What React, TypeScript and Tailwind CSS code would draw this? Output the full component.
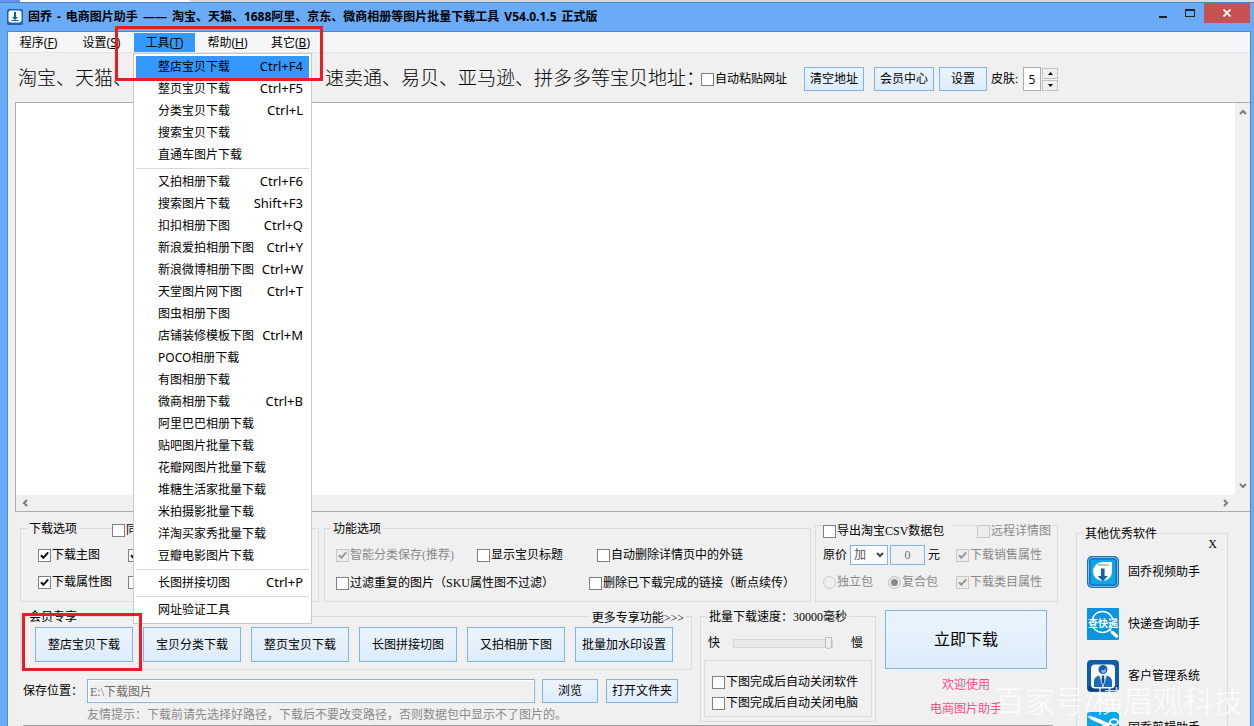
import type { ReactNode } from "react";
import clsx from "clsx";

type MenuEntry = { name: string; keys?: string } | "separator";

const titleParts = ["固乔", "-", "电商图片助手", "——", "淘宝、天猫、1688阿里、京东、微商相册等图片批量下载工具", "V54.0.1.5", "正式版"];

const menus = [
    { name: "程序", key: "F" },
    { name: "设置", key: "S" },
    { name: "工具", key: "T" },
    { name: "帮助", key: "H" },
    { name: "其它", key: "B" },
];

const toolEntries: MenuEntry[] = [
    { name: "整店宝贝下载", keys: "Ctrl+F4" },
    { name: "整页宝贝下载", keys: "Ctrl+F5" },
    { name: "分类宝贝下载", keys: "Ctrl+L" },
    { name: "搜索宝贝下载" },
    { name: "直通车图片下载" },
    "separator",
    { name: "又拍相册下载", keys: "Ctrl+F6" },
    { name: "搜索图片下载", keys: "Shift+F3" },
    { name: "扣扣相册下图", keys: "Ctrl+Q" },
    { name: "新浪爱拍相册下图", keys: "Ctrl+Y" },
    { name: "新浪微博相册下图", keys: "Ctrl+W" },
    { name: "天堂图片网下图", keys: "Ctrl+T" },
    { name: "图虫相册下图" },
    { name: "店铺装修模板下图", keys: "Ctrl+M" },
    { name: "POCO相册下载" },
    { name: "有图相册下载" },
    { name: "微商相册下载", keys: "Ctrl+B" },
    { name: "阿里巴巴相册下载" },
    { name: "贴吧图片批量下载" },
    { name: "花瓣网图片批量下载" },
    { name: "堆糖生活家批量下载" },
    { name: "米拍摄影批量下载" },
    { name: "洋淘买家秀批量下载" },
    { name: "豆瓣电影图片下载" },
    "separator",
    { name: "长图拼接切图", keys: "Ctrl+P" },
    "separator",
    { name: "网址验证工具" },
];

const memberActions = ["整店宝贝下载", "宝贝分类下载", "整页宝贝下载", "长图拼接切图", "又拍相册下图", "批量加水印设置"];

function Check({ label, checked, disabled, hideLabel }: { label: string; checked?: boolean; disabled?: boolean; hideLabel?: boolean }) {
    return (
        <label className={clsx("flex h-4 items-center gap-px whitespace-nowrap", disabled && "text-[#8a8a8a]")}>
            <span className="grid shrink-0">
                <input
                    type="checkbox"
                    defaultChecked={checked}
                    disabled={disabled}
                    aria-label={hideLabel ? label : undefined}
                    className="peer col-start-1 row-start-1 size-[13px] appearance-none border border-[#808080] bg-white disabled:border-[#c8c8c8] disabled:bg-[#ececec]"
                />
                <svg
                    viewBox="0 0 13 13"
                    className="pointer-events-none invisible col-start-1 row-start-1 size-[13px] peer-checked:visible"
                    fill="none"
                    stroke={disabled ? "#969696" : "#111"}
                    strokeWidth="2"
                >
                    <path d="M3 6.2 L5.4 8.8 L10.2 3.4" />
                </svg>
            </span>
            {!hideLabel && label}
        </label>
    );
}

function Radio({ label, checked }: { label: string; checked?: boolean }) {
    return (
        <label className="flex h-4 items-center gap-px whitespace-nowrap text-[#8a8a8a]">
            <input
                type="radio"
                name="package"
                defaultChecked={checked}
                disabled
                className="size-[13px] appearance-none rounded-full border border-[#cacaca] bg-[#efefef] checked:bg-[#8a8a8a] checked:shadow-[inset_0_0_0_2px_#efefef]"
            />
            {label}
        </label>
    );
}

function Group({ title, className, children }: { title?: ReactNode; className: string; children: ReactNode }) {
    return (
        <fieldset className={clsx("relative min-w-0 border border-[#dcdcdc]", className)}>
            {title && <legend className="absolute -top-2 left-[6px] bg-[#f0f0f0] px-[2px] leading-4">{title}</legend>}
            {children}
        </fieldset>
    );
}

function PushButton({ className, children }: { className: string; children: ReactNode }) {
    return (
        <button
            type="button"
            className={clsx(
                "shrink-0 whitespace-nowrap border border-[#7eb4ea] bg-linear-to-b from-[#ebf4fc] to-[#dcecfc] text-center",
                className
            )}
        >
            {children}
        </button>
    );
}

function ToolsMenu() {
    return (
        <ul className="absolute top-[21px] -left-px z-20 w-[179px] border border-[#c8c8c8] bg-white p-[2px]">
            {toolEntries.map((entry, i) =>
                entry === "separator" ? (
                    <li key={i} className="flex h-[5px] items-center">
                        <hr className="w-full border-[#d7d7d7]" />
                    </li>
                ) : (
                    <li key={entry.name}>
                        <button
                            type="button"
                            className={clsx(
                                "flex h-[22px] w-full items-center justify-between whitespace-nowrap pr-[6px] pl-[22px]",
                                i === 0 && "bg-[#3399ff]"
                            )}
                        >
                            <span>{entry.name}</span>
                            {entry.keys && <span className="text-[13px]">{entry.keys}</span>}
                        </button>
                    </li>
                )
            )}
        </ul>
    );
}

function AppIcon() {
    return (
        <svg viewBox="0 0 16 16" className="size-4">
            <rect width="16" height="16" rx="2" fill="#1566a8" />
            <rect x="1.5" y="1.5" width="13" height="12" rx="2" fill="#fff" />
            <path d="M7 3h2v5h2L8 11 5 8h2z" fill="#0f5c9e" />
            <path d="M4.5 11.5h7" stroke="#0f5c9e" />
        </svg>
    );
}

function VideoIcon() {
    return (
        <svg viewBox="0 0 32 32" className="size-8">
            <rect width="32" height="32" rx="5" fill="#1b6db8" />
            <rect x="1.5" y="1.5" width="29" height="29" rx="4" fill="none" stroke="#7cc4f2" />
            <rect x="3.5" y="3.5" width="25" height="25" rx="3" fill="#0aa5ea" />
            <path d="M25 6v10a9.5 9.5 0 1 1-9.5-10z" fill="#fff" />
            <path d="M11 9h11" stroke="#8b949c" strokeWidth="1.6" strokeDasharray="1.6 .5" />
            <path d="M14 12.5h3.6v7.500h3.200l-5 5.500-5-5.500H14z" fill="#1560ae" />
        </svg>
    );
}

function ExpressIcon() {
    return (
        <svg viewBox="0 0 32 32" className="size-8">
            <rect width="32" height="32" rx="1" fill="#0f93dd" />
            <circle cx="15.5" cy="14" r="10.5" fill="none" stroke="#fff" strokeWidth="1.4" />
            <path d="M22 21l2 2" stroke="#fff" strokeWidth="1.5" />
            <path d="M25.5 24.5l4 3.500" stroke="#fff" strokeWidth="3.5" strokeLinecap="round" />
            <rect x="1" y="11" width="30" height="8.5" fill="#0f93dd" />
            <text x="16" y="19" textAnchor="middle" fontSize="10" fontWeight="700" fill="#fff">
                查快递
            </text>
        </svg>
    );
}

function CustomerIcon() {
    return (
        <svg viewBox="0 0 32 32" className="size-8">
            <rect width="32" height="32" rx="4" fill="#0c5fae" />
            <path d="M1 26h30v2a3 3 0 0 1-3 3H4a3 3 0 0 1-3-3z" fill="#123f77" />
            <rect x="4" y="4.5" width="24" height="24" rx="4" fill="#fff" />
            <circle cx="16" cy="9.5" r="4.5" fill="#1361ae" />
            <path d="M14 10.500c2.500 0 4-1 5-2 .6 2.500-.5 4.500-3 4.500-1 0-2-1-2-2.500z" fill="#8bb6de" />
            <path d="M7 27v-5.500c0-4 3-5.500 6-6l3 7 3-7c3 .5 6 2 6 6V27z" fill="#1b6db8" />
            <path d="M14.500 15.500h3l-.7 2 1.200 7-2 2.500-2-2.500 1.200-7z" fill="#0e478a" />
            <path d="M12.500 15L16 27l3.500-12" fill="none" stroke="#fff" strokeWidth=".8" />
        </svg>
    );
}

function ClipIcon() {
    return (
        <svg viewBox="0 0 32 32" className="size-8">
            <rect width="32" height="32" rx="3" fill="#0aa5ea" />
            <path d="M0 4c7 0 12 3 24 8l-3 3C13 11 6 10 0 4z" fill="#fff" />
            <path d="M1 17c7 1 14-2 23-6" fill="none" stroke="#fff" strokeWidth="2" />
            <ellipse cx="27" cy="10" rx="4" ry="2.8" fill="none" stroke="#fff" strokeWidth="1.8" />
            <circle cx="24" cy="19" r="3.5" fill="none" stroke="#fff" strokeWidth="2" />
        </svg>
    );
}

const otherApps = [
    { name: "固乔视频助手", icon: VideoIcon },
    { name: "快递查询助手", icon: ExpressIcon },
    { name: "客户管理系统", icon: CustomerIcon },
    { name: "固乔剪辑助手", icon: ClipIcon },
];

function Arrow({ d }: { d: string }) {
    return (
        <svg viewBox="0 0 8 8" className="size-2" fill="none" stroke="#7b7b7b" strokeWidth="2">
            <path d={d} />
        </svg>
    );
}

function TitleBar() {
    return (
        <header className="flex h-7 shrink-0 items-start pr-px pl-[7px] font-['Noto_Sans','Noto_Sans_CJK_SC',sans-serif]">
            <div className="flex flex-1 items-center gap-[5px] pt-[5px]">
                <AppIcon />
                <h1 className="flex gap-[5px] text-xs leading-[18px] font-bold whitespace-nowrap">
                    {titleParts.map((part) => (
                        <span key={part}>{part}</span>
                    ))}
                </h1>
            </div>
            <button type="button" aria-label="最小化" className="flex h-5 w-[27px] items-center justify-center pt-2">
                <span className="h-[2px] w-2 bg-[#222]" />
            </button>
            <button type="button" aria-label="最大化" className="flex h-5 w-7 items-center justify-center">
                <span className="h-2 w-[10px] border border-t-2 border-[#222]" />
            </button>
            <button type="button" aria-label="关闭" className="flex h-5 w-[46px] items-center justify-center bg-[#c75050]">
                <svg viewBox="0 0 8 8" className="size-2" stroke="#fff" strokeWidth="1.8">
                    <path d="M.5 .5l7 7M7.5 .5l-7 7" />
                </svg>
            </button>
        </header>
    );
}

function MenuBar() {
    return (
        <nav className="flex h-[21px] shrink-0 gap-[2px] border-b border-[#e4e6e8] bg-[#f5f6f7] font-['Noto_Sans','Noto_Sans_CJK_SC',sans-serif]">
            {menus.map((menu) => (
                <div key={menu.key} className="relative w-[61px]">
                    <button
                        type="button"
                        className={clsx("mt-px h-[19px] w-full leading-[19px]", menu.key === "T" && "bg-[#3399ff]")}
                    >
                        {menu.name}(<u>{menu.key}</u>)
                    </button>
                    {menu.key === "T" && (
                        <>
                            <ToolsMenu />
                            <div className="pointer-events-none absolute -top-[6px] -left-[19px] z-30 h-[55px] w-[208px] border-[3px] border-[#ed1c24]" />
                        </>
                    )}
                </div>
            ))}
        </nav>
    );
}

function Toolbar() {
    return (
        <div className="flex h-[49px] shrink-0 items-center pt-[3px] pl-[10px]">
            <div className="flex shrink-0 text-[19px] leading-6 font-light whitespace-nowrap">
                <span className="w-[307px]">淘宝、天猫、</span>
                <span className="w-[376px]">速卖通、易贝、亚马逊、拼多多等宝贝地址：</span>
            </div>
            <Check label="自动粘贴网址" />
            <PushButton className="ml-[17px] h-6 w-[60px]">清空地址</PushButton>
            <PushButton className="ml-[10px] h-6 w-[60px]">会员中心</PushButton>
            <PushButton className="ml-[5px] h-6 w-12">设置</PushButton>
            <label className="ml-1 flex items-center whitespace-nowrap">
                <span className="w-8">皮肤:</span>
                <input defaultValue="5" className="h-6 w-[18px] border border-[#abadb3] bg-white text-center font-['Open_Sans',sans-serif]" />
            </label>
            <div className="ml-px flex flex-col gap-px">
                {["M1 4h5L3.5 1z", "M1 1h5L3.5 4z"].map((d, i) => (
                    <button key={d} type="button" aria-label={i ? "减" : "加"} className="flex h-[11px] w-4 items-center justify-center border border-[#c2c2c2]">
                        <svg viewBox="0 0 7 5" className="h-[5px] w-[7px]">
                            <path d={d} />
                        </svg>
                    </button>
                ))}
            </div>
        </div>
    );
}

function AddressPane() {
    return (
        <div className="ml-[7px] grid h-[410px] shrink-0 grid-cols-[1fr_15px] grid-rows-[1fr_16px] border border-r-0 border-[#abadb3] bg-[#f0f0f0]">
            <textarea aria-label="宝贝地址" className="resize-none bg-white outline-none" />
            <div className="flex flex-col items-center justify-between py-[5px]">
                <Arrow d="M1 6l3-3 3 3" />
                <Arrow d="M1 2l3 3 3-3" />
            </div>
            <div className="flex items-center justify-between px-[5px]">
                <Arrow d="M6 1L3 4l3 3" />
                <Arrow d="M2 1l3 3-3 3" />
            </div>
        </div>
    );
}

function OptionGroups() {
    return (
        <div className="flex">
            <Group title="下载选项" className="h-[74px] w-[299px] shrink-0 pt-[18px] pl-[17px]">
                <div className="absolute -top-[7px] left-[91px] bg-[#f0f0f0]">
                    <Check label="同" />
                </div>
                <div className="grid grid-cols-[90px_1fr] gap-y-[11px]">
                    <Check label="下载主图" checked />
                    <Check label="下载颜色图" checked hideLabel />
                    <Check label="下载属性图" checked />
                    <Check label="下载详情图" hideLabel />
                </div>
            </Group>

            <Group title="功能选项" className="ml-[5px] h-[74px] flex-1 pt-[18px] pl-[11px]">
                <div className="grid grid-cols-[141px_120px_1fr]">
                    <Check label="智能分类保存(推荐)" checked disabled />
                    <Check label="显示宝贝标题" />
                    <Check label="自动删除详情页中的外链" />
                </div>
                <div className="mt-3 grid grid-cols-[253px_1fr]">
                    <Check label="过滤重复的图片（SKU属性图不过滤）" />
                    <Check label="删除已下载完成的链接（断点续传）" />
                </div>
            </Group>

            <Group className="-mt-[3px] ml-1 h-[77px] w-[243px] shrink-0 pt-[18px] pl-[7px]">
                <div className="absolute -top-[3px] left-[7px] bg-[#f0f0f0] pr-2">
                    <Check label="导出淘宝CSV数据包" />
                </div>
                <div className="absolute -top-[3px] right-[6px] bg-[#f0f0f0]">
                    <Check label="远程详情图" disabled />
                </div>
                <div className="grid grid-cols-[133px_1fr] items-center gap-y-[5px]">
                    <div className="flex h-[22px] items-center">
                        <label htmlFor="price-mode" className="w-[27px]">原价</label>
                        <div className="grid">
                            <select id="price-mode" className="col-start-1 row-start-1 h-5 w-[38px] appearance-none border border-[#7eb4ea] bg-white pl-[3px] text-[#555]">
                                <option>加</option>
                                <option>减</option>
                            </select>
                            <svg viewBox="0 0 8 6" className="pointer-events-none col-start-1 row-start-1 mr-1 h-[6px] w-2 self-center justify-self-end" fill="none" stroke="#444" strokeWidth="2">
                                <path d="M1 1l3 3 3-3" />
                            </svg>
                        </div>
                        <input aria-label="加价" defaultValue="0" disabled className="ml-[2px] h-5 w-[35px] border border-[#7eb4ea] bg-[#f0f0f0] text-center text-[#6d6d6d]" />
                        <span className="ml-[3px]">元</span>
                    </div>
                    <Check label="下载销售属性" checked disabled />
                    <div className="grid h-[22px] grid-cols-[65px_1fr] items-center">
                        <Radio label="独立包" />
                        <Radio label="复合包" checked />
                    </div>
                    <Check label="下载类目属性" checked disabled />
                </div>
            </Group>
        </div>
    );
}

function MemberActions() {
    return (
        <div className="mt-[6px] min-w-0 flex-1">
            <Group title="会员专享" className="h-[54px] pt-[10px] pl-[14px]">
                <a href="#more" className="absolute -top-[7px] right-[5px] bg-[#f0f0f0] px-[2px] leading-4">更多专享功能&gt;&gt;&gt;</a>
                <div className="flex gap-[10px]">
                    {memberActions.map((name, i) => (
                        <div key={name} className="relative">
                            <PushButton className="h-[35px] w-[98px]">{name}</PushButton>
                            {i === 0 && (
                                <div className="pointer-events-none absolute -top-[14px] -left-[13px] z-30 h-[58px] w-[120px] border-[3px] border-[#ed1c24]" />
                            )}
                        </div>
                    ))}
                </div>
            </Group>
            <div className="mt-[9px] flex items-center pr-[14px] pl-[3px]">
                <label htmlFor="save-path" className="w-16 shrink-0">保存位置：</label>
                <input
                    id="save-path"
                    defaultValue="E:\下载图片"
                    className="h-6 min-w-0 flex-1 border border-[#7eb4ea] bg-[#f0f0f0] px-[2px] text-[#6d6d6d] shadow-[inset_0_0_0_1px_#fff]"
                />
                <PushButton className="ml-[7px] h-6 w-14">浏览</PushButton>
                <PushButton className="ml-2 h-6 w-[72px]">打开文件夹</PushButton>
            </div>
            <p className="mt-1 pl-[67px] leading-4 whitespace-nowrap text-[#8a8a8a]">
                友情提示：下载前请先选择好路径，下载后不要改变路径，否则数据包中显示不了图片的。
            </p>
        </div>
    );
}

function SpeedGroup() {
    return (
        <Group title="批量下载速度：30000毫秒" className="mt-[6px] ml-2 h-[106px] w-[176px] shrink-0 px-[3px] pt-[18px]">
            <div className="flex items-center pl-1">
                <span className="w-[25px]">快</span>
                <input
                    type="range"
                    aria-label="批量下载速度"
                    defaultValue={100}
                    className="h-[9px] w-[100px] appearance-none border border-[#d6d6d6] bg-[#e7eaea] [&::-webkit-slider-thumb]:h-3 [&::-webkit-slider-thumb]:w-[7px] [&::-webkit-slider-thumb]:appearance-none [&::-webkit-slider-thumb]:rounded-b-[3px] [&::-webkit-slider-thumb]:border [&::-webkit-slider-thumb]:border-[#bcbcbc] [&::-webkit-slider-thumb]:bg-[#f0f0f0]"
                />
                <span className="ml-[18px]">慢</span>
            </div>
            <div className="mt-[9px] flex h-[57px] flex-col gap-[5px] border border-[#dcdcdc] pt-[13px] pl-[7px]">
                <Check label="下图完成后自动关闭软件" />
                <Check label="下图完成后自动关闭电脑" />
            </div>
        </Group>
    );
}

function OtherApps() {
    return (
        <Group title="其他优秀软件" className="mt-[21px] mr-[22px] ml-[18px] h-[240px] w-[152px] shrink-0 pt-[22px] pl-[10px]">
            <button type="button" className="absolute top-[2px] right-[10px] leading-4">X</button>
            <ul className="flex flex-col gap-5">
                {otherApps.map(({ name, icon: Icon }) => (
                    <li key={name}>
                        <a href="#app" className="flex items-center gap-[9px]">
                            <Icon />
                            {name}
                        </a>
                    </li>
                ))}
            </ul>
        </Group>
    );
}

export default function App() {
    return (
        <div className="relative flex h-screen flex-col overflow-hidden bg-[#6aabf7] font-['Liberation_Serif','Noto_Sans_CJK_SC',sans-serif] text-xs text-black">
            <div className="flex h-[2px] shrink-0 bg-[#d8dbe0]">
                <div className="w-5 bg-[#6a8cf7]" />
                <div className="w-[170px] bg-white" />
            </div>
            <div className="flex min-h-0 flex-1 flex-col border-t border-[#4a86c0] pr-[3px]">
                <TitleBar />
                <div className="ml-[7px] flex min-h-0 flex-1 flex-col border border-b-0 border-[#4e8acb] bg-[#f0f0f0]">
                    <MenuBar />
                    <Toolbar />
                    <AddressPane />
                    <main className="flex items-start pl-3">
                        <div className="min-w-0 flex-1 pt-4">
                            <OptionGroups />
                            <div className="mt-2 flex">
                                <MemberActions />
                                <SpeedGroup />
                                <div className="mr-[11px] ml-[9px] w-[162px] shrink-0 text-center text-[#ff4d88]">
                                    <PushButton className="h-[59px] w-full text-base text-black">立即下载</PushButton>
                                    <p className="mt-2 leading-4">欢迎使用</p>
                                    <p className="mt-2 leading-4">电商图片助手</p>
                                </div>
                            </div>
                            <hr className="mt-[2px] mr-[5px] ml-[3px] border-[#a0a0a0]" />
                        </div>
                        <OtherApps />
                    </main>
                </div>
            </div>
            <div className="pointer-events-none absolute right-[11px] bottom-1 z-30 text-[30px] leading-10 font-light whitespace-nowrap text-white/80">
                百家号/横眉观科技
            </div>
        </div>
    );
}
